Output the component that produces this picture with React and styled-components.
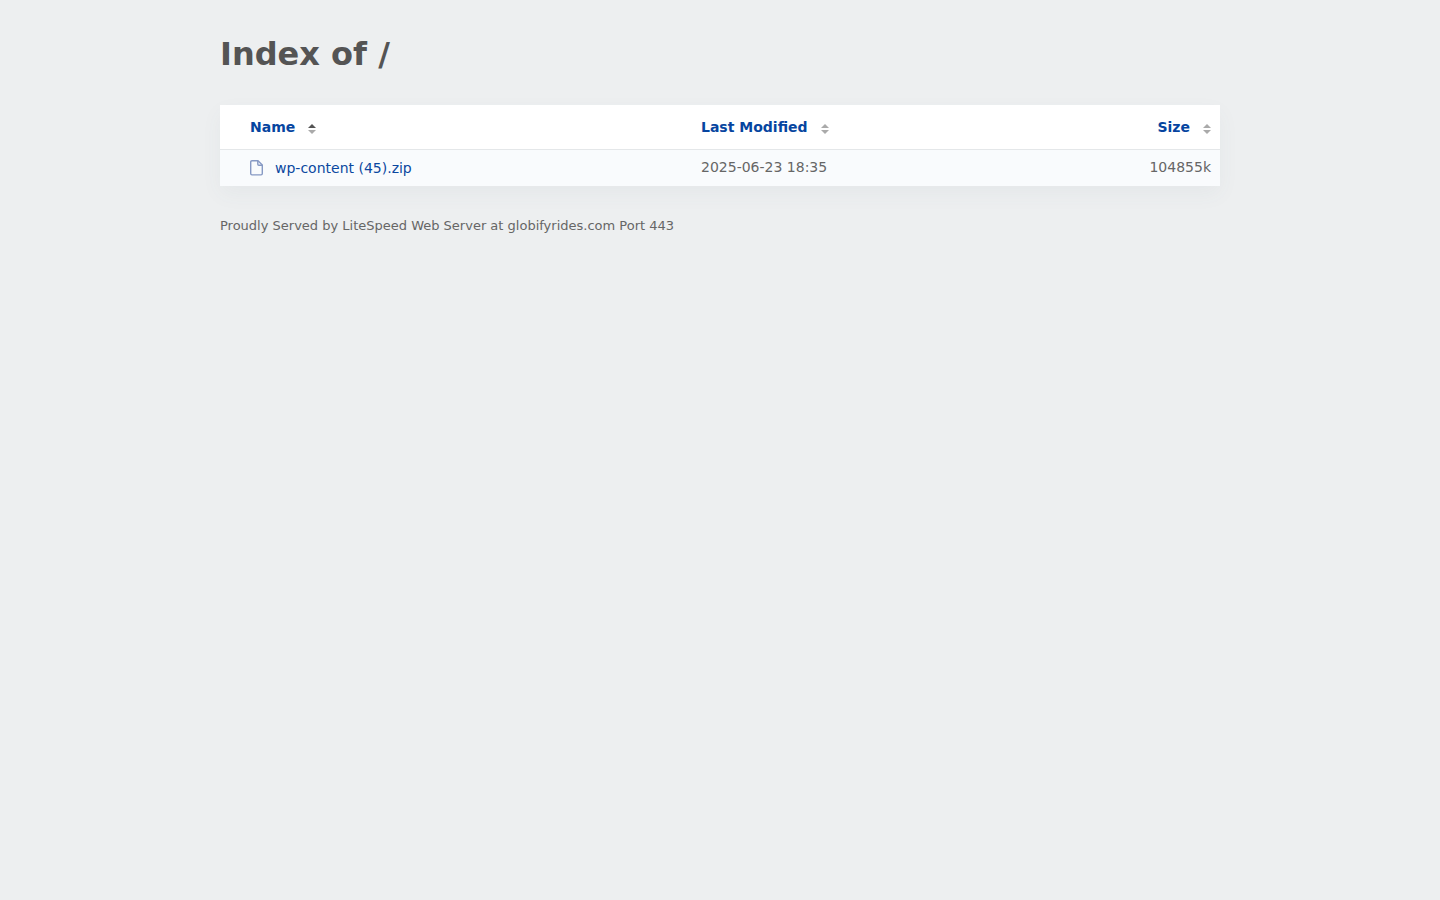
import React, { useState } from 'react'
import styled, { createGlobalStyle } from 'styled-components'

const GlobalStyle = createGlobalStyle`
  *, *::before, *::after {
    box-sizing: border-box;
  }
  body {
    margin: 0;
    background: #edeff0;
    color: #545454;
    font-family: "DejaVu Sans", Verdana, sans-serif;
    font-size: 14px;
    line-height: 20px;
  }
`

const Page = styled.main`
  max-width: 1040px;
  margin: 0 auto;
  padding: 32px 20px;
`

const Title = styled.h1`
  margin: 0 0 29px;
  font-size: 32px;
  line-height: 44px;
`

const Listing = styled.table`
  width: 100%;
  table-layout: fixed;
  border-collapse: separate;
  border-spacing: 0;
  background: #fff;
  box-shadow: 0 8px 20px 0 rgba(84, 100, 110, 0.05);
`

const HeadCell = styled.th`
  width: ${props => props.$width};
  padding: 12px 9px 12px ${props => props.$indent || '9px'};
  border-bottom: 1px solid #e4e7e9;
  text-align: ${props => props.$align || 'left'};
`

const Cell = styled.td`
  padding: 7px 9px 9px ${props => props.$indent || '9px'};
  background: #f9fbfd;
  color: #666;
  text-align: ${props => props.$align || 'left'};
`

const NameCell = styled(Cell)`
  padding-top: 8px;
  padding-bottom: 8px;
`

const SortButton = styled.button`
  display: inline-flex;
  align-items: center;
  gap: 13px;
  padding: 0;
  border: 0;
  background: none;
  color: #0645a0;
  font: inherit;
  cursor: pointer;
  vertical-align: top;
  svg {
    margin-top: 4px;
  }
`

const FileLink = styled.a`
  display: flex;
  align-items: center;
  gap: 12px;
  color: #0b48a0;
  text-decoration: none;
  &:hover {
    text-decoration: underline;
  }
`

const Footer = styled.footer`
  margin-top: 30px;
  color: #666;
  font-size: 13px;
`

const columns = [
  { key: 'name', label: 'Name', width: '47.2%', indent: '30px' },
  { key: 'modified', label: 'Last Modified', width: '30%' },
  { key: 'size', label: 'Size', width: '22.8%', align: 'right' },
]

const files = [
  { name: 'wp-content (45).zip', modified: '2025-06-23 18:35', size: 104855 },
]

const SortIcon = ({ direction }) => (
  <svg width="8" height="10" viewBox="0 0 8 10" aria-hidden="true">
    <path d="M0 4L4 0L8 4Z" fill={direction === 'asc' ? '#545454' : '#aaa'} />
    <path d="M0 6L4 10L8 6Z" fill={direction === 'desc' ? '#545454' : '#aaa'} />
  </svg>
)

const FileIcon = () => (
  <svg width="13" height="16" viewBox="0 0 13 16" fill="none" stroke="#8699c4" strokeWidth="1.4" strokeLinejoin="round" aria-hidden="true">
    <path d="M8 0.7H2Q0.7 0.7 0.7 2V13.6Q0.7 14.9 2 14.9H11Q12.3 14.9 12.3 13.6V5Z" />
    <path d="M7.8 0.7V4.2Q7.8 5.2 8.8 5.2H12.3" />
  </svg>
)

const App = () => {
  const [sort, setSort] = useState({ key: 'name', direction: 'asc' })

  function sortBy(key) {
    const flip = sort.key === key && sort.direction === 'asc'
    setSort({ key, direction: flip ? 'desc' : 'asc' })
  }

  const rows = [...files].sort((a, b) => {
    const order = a[sort.key] > b[sort.key] ? 1 : -1
    return sort.direction === 'asc' ? order : -order
  })

  return (
    <Page>
      <GlobalStyle />
      <Title>Index of /</Title>
      <Listing>
        <thead>
          <tr>
            {columns.map(({ key, label, width, indent, align }) => (
              <HeadCell key={key} scope="col" $width={width} $indent={indent} $align={align}>
                <SortButton type="button" onClick={() => sortBy(key)}>
                  {label}
                  <SortIcon direction={sort.key === key ? sort.direction : null} />
                </SortButton>
              </HeadCell>
            ))}
          </tr>
        </thead>
        <tbody>
          {rows.map(file => (
            <tr key={file.name}>
              <NameCell $indent="30px">
                <FileLink href={`/${encodeURIComponent(file.name)}`}>
                  <FileIcon />
                  {file.name}
                </FileLink>
              </NameCell>
              <Cell>{file.modified}</Cell>
              <Cell $align="right">{file.size}k</Cell>
            </tr>
          ))}
        </tbody>
      </Listing>
      <Footer>Proudly Served by LiteSpeed Web Server at globifyrides.com Port 443</Footer>
    </Page>
  )
}

export default App
